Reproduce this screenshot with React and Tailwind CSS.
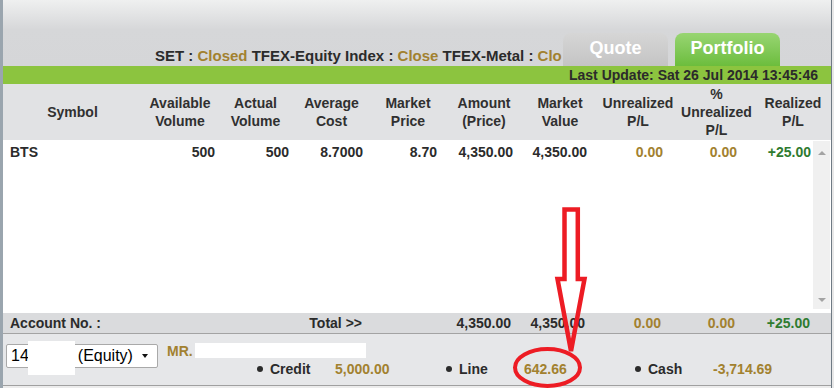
export default function App() {
  const bodyCols = "grid-cols-[139px_75px_74px_74px_74px_76px_74px_76px_74px_74px]";
  return (
    <div className="relative w-[834px] h-[388px] overflow-hidden bg-[#ececec] font-['Liberation_Sans',Arial,sans-serif] text-[#2b2b2b]">
      <div className="flex h-full">
        <div className="w-[3px] shrink-0 bg-[#9aa5ae]" />
        <div className="flex w-[828px] shrink-0 flex-col">
          {/* top area */}
          <div className="flex h-[66px] items-end bg-linear-to-b from-[#eff0f0] via-[#d6d7d9] via-45% to-[#d5d6d8]">
            <div className="w-[555px] whitespace-nowrap pl-[152px] pb-[2px] text-[15px] font-bold leading-[17px] text-[#2b2b2b]">
              SET : <span className="text-[#a2812f]">Closed</span> TFEX-Equity Index : <span className="text-[#a2812f]">Close</span> TFEX-Metal : <span className="text-[#a2812f]">Clo</span>
            </div>
            <div className="ml-[5px] flex gap-[7px]">
              <div className="flex h-[33px] w-[105px] items-center justify-center rounded-t-[8px] bg-linear-to-b from-[#d6d6d6] to-[#c4c4c4] pb-[2px] text-[18px] font-bold text-white">
                Quote
              </div>
              <div className="flex h-[33px] w-[105px] items-center justify-center rounded-t-[8px] bg-linear-to-b from-[#98d572] to-[#6cbd3c] pb-[2px] text-[18px] font-bold text-white">
                Portfolio
              </div>
            </div>
          </div>
          {/* green bar */}
          <div className="flex h-[18px] items-center justify-end bg-[#8cc43f] pr-[13px] text-[14px] font-bold leading-[18px] text-[#2b2b2b]">
            Last Update: Sat 26 Jul 2014 13:45:46
          </div>
          {/* header */}
          <div className="grid h-[56px] grid-cols-[139px_76px_75px_77px_76px_76px_76px_80px_77px_76px] bg-[#e1e2e4] text-[14px] font-bold leading-[18px] text-[#303030]">
            <div className="flex items-center justify-center text-center">Symbol</div>
            <div className="flex items-center justify-center text-center">Available<br />Volume</div>
            <div className="flex items-center justify-center text-center">Actual<br />Volume</div>
            <div className="flex items-center justify-center text-center">Average<br />Cost</div>
            <div className="flex items-center justify-center text-center">Market<br />Price</div>
            <div className="flex items-center justify-center text-center">Amount<br />(Price)</div>
            <div className="flex items-center justify-center text-center">Market<br />Value</div>
            <div className="flex items-center justify-center text-center">Unrealized<br />P/L</div>
            <div className="flex items-center justify-center text-center">%<br />Unrealized<br />P/L</div>
            <div className="flex items-center justify-center text-center">Realized<br />P/L</div>
          </div>
          {/* body */}
          <div className="flex h-[173px] bg-white">
            <div className="w-[810px]">
              <div className={`grid h-[24px] ${bodyCols} items-center text-[14px] font-bold leading-[24px] text-[#2b2b2b]`}>
                <div className="pl-[7px] text-left">BTS</div>
                <div className="pr-[2px] text-right">500</div>
                <div className="pr-[2px] text-right">500</div>
                <div className="pr-[2px] text-right">8.7000</div>
                <div className="pr-[2px] text-right">8.70</div>
                <div className="pr-[2px] text-right">4,350.00</div>
                <div className="pr-[2px] text-right">4,350.00</div>
                <div className="pr-[2px] text-right text-[#a2812f]">0.00</div>
                <div className="pr-[2px] text-right text-[#a2812f]">0.00</div>
                <div className="pr-[2px] text-right text-[#2f7b30]">+25.00</div>
              </div>
            </div>
            <div className="mt-[1px] flex h-[168px] w-[17px] flex-col items-center justify-between bg-[#f0f0f0] pt-[10px] pb-[7px]">
              <svg width="8" height="4" viewBox="0 0 8 4"><polygon points="0,4 4,0 8,4" fill="#a3a3a3" /></svg>
              <svg width="8" height="4" viewBox="0 0 8 4"><polygon points="0,0 8,0 4,4" fill="#a3a3a3" /></svg>
            </div>
          </div>
          {/* totals */}
          <div className="grid h-[21px] grid-cols-[139px_75px_74px_74px_74px_76px_74px_76px_74px_74px_18px] items-center border-b border-[#a3a3a3] bg-[#dadbdd] text-[14px] font-bold leading-[20px] text-[#2b2b2b]">
            <div className="whitespace-nowrap pl-[7px] text-left">Account No. :</div>
            <div />
            <div />
            <div className="pr-[3px] text-right">Total &gt;&gt;</div>
            <div />
            <div className="pr-[4px] text-right">4,350.00</div>
            <div className="pr-[4px] text-right">4,350.00</div>
            <div className="pr-[4px] text-right text-[#a2812f]">0.00</div>
            <div className="pr-[4px] text-right text-[#a2812f]">0.00</div>
            <div className="pr-[3px] text-right text-[#2f7b30]">+25.00</div>
            <div />
          </div>
          {/* bottom */}
          <div className="flex h-[52px] items-start border-b border-[#a0a0a0] bg-[#e6e7e9] pl-[3px] pt-[9px]">
            <div className="mt-[1px] flex h-[24px] w-[152px] items-center rounded-[2px] border border-[#a9a9a9] bg-white pl-[4px] pr-[9px] text-[16px] leading-[22px] text-black">
              <span>14</span>
              <span className="inline-block w-[49px]" />
              <span>(Equity)</span>
              <svg className="ml-auto" width="6" height="4" viewBox="0 0 6 4"><polygon points="0,0 6,0 3,4" fill="#111" /></svg>
            </div>
            <div className="ml-[9px] flex flex-col">
              <div className="text-[14px] font-bold leading-[16px] text-[#a2812f]">MR.</div>
              <div className="ml-[90px] mt-[2px] grid grid-cols-[189px_189px_189px] text-[14px] font-bold leading-[16px]">
                <div className="flex items-center">
                  <div className="flex w-[78px] items-center">
                    <span className="h-[6px] w-[6px] rounded-full bg-[#2b2b2b]" />
                    <span className="ml-[7px]">Credit</span>
                  </div>
                  <span className="text-[#a2812f]">5,000.00</span>
                </div>
                <div className="flex items-center">
                  <div className="flex w-[78px] items-center">
                    <span className="h-[6px] w-[6px] rounded-full bg-[#2b2b2b]" />
                    <span className="ml-[7px]">Line</span>
                  </div>
                  <span className="text-[#a2812f]">642.66</span>
                </div>
                <div className="flex items-center">
                  <div className="flex w-[78px] items-center">
                    <span className="h-[6px] w-[6px] rounded-full bg-[#2b2b2b]" />
                    <span className="ml-[7px]">Cash</span>
                  </div>
                  <span className="text-[#a2812f]">-3,714.69</span>
                </div>
              </div>
            </div>
          </div>
        </div>
        <div className="w-[1px] shrink-0 bg-[#6f7a84]" />
        <div className="w-[2px] shrink-0 bg-[#e8e8e8]" />
      </div>

      {/* redaction boxes */}
      <div className="absolute left-[28px] top-[341px] h-[34px] w-[47px] bg-white" />
      <div className="absolute left-[195px] top-[343px] h-[15px] w-[171px] bg-white" />

      {/* red annotation */}
      <svg className="pointer-events-none absolute left-0 top-0" width="834" height="388" viewBox="0 0 834 388">
        <polygon
          points="564.5,209.5 577.8,209.5 577.8,279 584.5,279 571,351 557.5,279 564.5,279"
          fill="none"
          stroke="#ed1c24"
          strokeWidth="4.5"
          strokeLinejoin="miter"
        />
        <ellipse cx="547.5" cy="367.5" rx="32.5" ry="18.5" fill="none" stroke="#ed1c24" strokeWidth="4" />
      </svg>
    </div>
  );
}
